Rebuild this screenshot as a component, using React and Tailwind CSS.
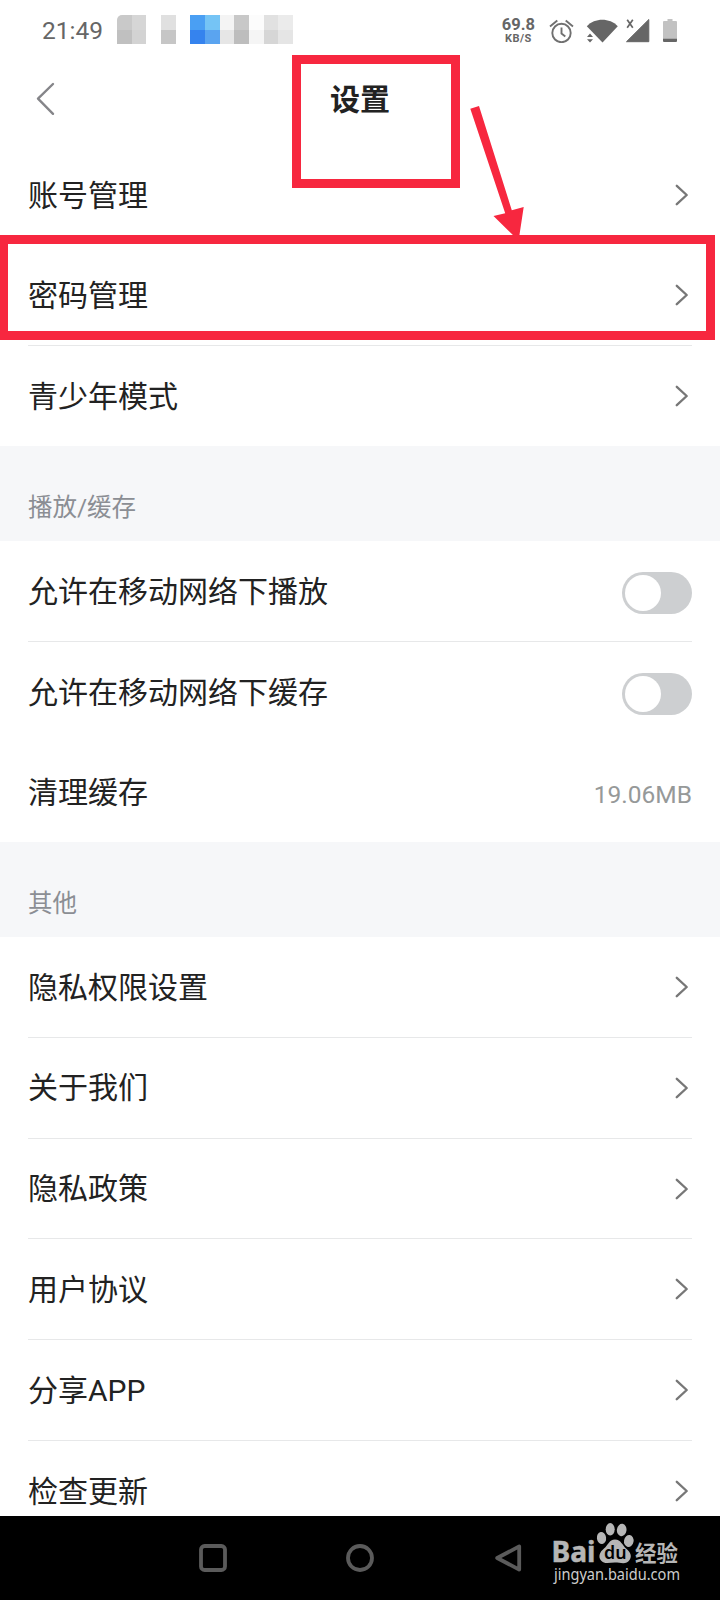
const mosaicTop = [
  "bg-[#c9c9c9] rounded-tl-[5px]", "bg-[#d6d6d6]", "bg-white", "bg-[#e0e0e0]", "bg-white", "bg-[#4a9ff3]",
  "bg-[#75c4f5]", "bg-[#f4f4f4]", "bg-[#c8c8c8]", "bg-[#fcfcfc]", "bg-[#e1e1e1]", "bg-[#ebebeb]",
];
const mosaicBottom = [
  "bg-[#c0c0c0]", "bg-[#d3d3d3]", "bg-white", "bg-[#c6c6c6]", "bg-white", "bg-[#3583ee]",
  "bg-[#5aa4f0]", "bg-[#e6e6e6]", "bg-[#bdbdbd]", "bg-[#f5f5f5]", "bg-[#d6d6d6]", "bg-[#e5e5e5]",
];

const otherItems = ["隐私权限设置", "关于我们", "隐私政策", "用户协议", "分享APP", "检查更新"];

export default function App() {
  return (
    <div className="relative w-[720px] h-[1600px] overflow-hidden flex flex-col bg-white text-[#222222] font-[Roboto,'Noto_Sans_CJK_SC',sans-serif]">
      <StatusBar />

      <header className="h-[84.9px] shrink-0 grid grid-cols-[1fr_auto_1fr] items-start px-9 pt-[22px]">
        <svg className="w-5 h-[34px]" viewBox="0 0 20 34" fill="none" stroke="#858589" strokeWidth="2.4" strokeLinecap="round" strokeLinejoin="round">
          <path d="M17 2 2 16.7 17 31.8" />
        </svg>
        <h1 className="text-[30px] leading-9 font-bold">设置</h1>
      </header>

      <main className="flex-1 min-h-0 overflow-hidden">
        <Row label="账号管理">
          <Chevron />
        </Row>
        <Row label="密码管理" divider>
          <Chevron />
        </Row>
        <Row label="青少年模式">
          <Chevron />
        </Row>

        <SectionTitle>播放/缓存</SectionTitle>
        <Row label="允许在移动网络下播放" divider>
          <Toggle />
        </Row>
        <Row label="允许在移动网络下缓存">
          <Toggle />
        </Row>
        <Row label="清理缓存">
          <span className="text-[24.5px] text-[#969999] pt-1.5">19.06MB</span>
        </Row>

        <SectionTitle>其他</SectionTitle>
        {otherItems.map((label) => (
          <Row key={label} label={label} divider>
            <Chevron />
          </Row>
        ))}
      </main>

      <NavigationBar />
      <Highlights />
    </div>
  );
}

function StatusBar() {
  return (
    <div className="h-[60px] shrink-0 flex items-start pl-[42px] pr-[43px] text-[#666666]">
      <span className="mt-[15px] w-[75px] text-[24.5px] leading-[31px]">21:49</span>
      <div className="mt-[15px] w-[176px] h-[29px] grid grid-cols-12 grid-rows-2">
        {[...mosaicTop, ...mosaicBottom].map((color, i) => (
          <span key={i} className={color} />
        ))}
      </div>

      <div className="ml-auto flex items-start">
        <div className="mt-[17px] mr-3.5 flex flex-col items-center font-bold">
          <span className="text-[16.5px] leading-4">69.8</span>
          <span className="text-[11px] leading-[11px] tracking-[0.5px]">KB/S</span>
        </div>
        <svg className="mt-[19px] w-[25px] h-6 mr-3" viewBox="0 0 25 24" fill="none" stroke="#707070" strokeWidth="1.9">
          <circle cx="12.5" cy="14" r="9.2" />
          <path d="M1 7.5 8.3 1.6M24 7.5 16.7 1.6M12.5 8.5v6l3.8 3" />
        </svg>
        <svg className="mt-[19px] w-[32px] h-6 mr-2" viewBox="0 0 32 24" fill="#666666">
          <path d="M.8 7.2C9-1.3 23.5-1.3 31.8 7.2L16.5 23.4Z" />
          <path d="m1 18 3-3.6L7 18Zm0 2.2h6l-3 3.3Z" stroke="#ffffff" strokeWidth="1.6" paintOrder="stroke" />
        </svg>
        <svg className="mt-[19px] w-6 h-6 mr-[13px]" viewBox="0 0 24 24" fill="#666666">
          <path d="M22.8.5v22.2H.5Z" stroke="#666666" strokeWidth="1" strokeLinejoin="round" />
          <path d="m1.2.8 5.6 8M6.8.8l-5.6 8" stroke="#666666" strokeWidth="1.7" />
        </svg>
        <svg className="mt-[19px] w-3.5 h-[23px]" viewBox="0 0 14 23">
          <path d="M4.5 0h5v2H13q1 0 1 1v17H0V3q0-1 1-1h3.5Z" fill="#c2c2c2" />
          <path d="M0 19.7h14V22q0 1-1 1H1q-1 0-1-1Z" fill="#666666" />
        </svg>
      </div>
    </div>
  );
}

function Row({ label, divider, children }) {
  return (
    <div className={divider ? "h-[100.8px] px-7" : "h-[100.3px] px-7"}>
      <div className={`h-full flex items-center justify-between ${divider ? "border-b border-[#e7e8e9]" : ""}`}>
        <span className="text-[30px] leading-10 pt-[1.4px]">{label}</span>
        {children}
      </div>
    </div>
  );
}

function SectionTitle({ children }) {
  return (
    <div className="h-[94.7px] bg-[#f6f7f9] px-7 pt-[44.8px] text-[24.5px] leading-[34px] text-[#8b8e94]">
      {children}
    </div>
  );
}

function Chevron() {
  return (
    <svg className="w-3.5 h-[22px] mr-1" viewBox="0 0 14 22" fill="none" stroke="#777777" strokeWidth="2.3" strokeLinecap="round" strokeLinejoin="round">
      <path d="M2.8 1.8 12.7 11 2.8 20.2" />
    </svg>
  );
}

function Toggle() {
  return (
    <div className="w-[70px] h-[42px] mt-1 rounded-full bg-[#cdcfd1] p-[3px] flex items-center">
      <div className="size-9 rounded-full bg-white" />
    </div>
  );
}

function NavigationBar() {
  return (
    <nav className="relative h-[84px] shrink-0 bg-black pl-[199px] pr-[198px] flex items-center justify-between">
      <svg className="size-7" viewBox="0 0 28 28" fill="none" stroke="#5b5b5b" strokeWidth="3.8">
        <rect x="2" y="2" width="24" height="24" rx="3.6" />
      </svg>
      <svg className="size-7 -translate-x-px" viewBox="0 0 28 28" fill="none" stroke="#5b5b5b" strokeWidth="3.8">
        <circle cx="14" cy="14" r="12" />
      </svg>
      <svg className="size-7" viewBox="0 0 28 28" fill="none" stroke="#5b5b5b" strokeWidth="3.8" strokeLinejoin="round">
        <path d="M25.2 2.4v23.2L3.2 14Z" />
      </svg>

      <Watermark />
    </nav>
  );
}

function Watermark() {
  return (
    <svg className="absolute left-[550px] top-1.5 w-[136px] h-[70px]" viewBox="0 0 136 70" fill="#b6b6b6">
      <text x="1.5" y="40" fontSize="28.5" fontWeight="700" textLength="44" lengthAdjust="spacingAndGlyphs" fontFamily="Noto Sans, sans-serif" stroke="#b6b6b6" strokeWidth="0.5">Bai</text>
      <ellipse cx="51.5" cy="16" rx="4.6" ry="6.1" transform="rotate(-8 51.5 16)" />
      <ellipse cx="60.2" cy="7.3" rx="4.5" ry="6.2" />
      <ellipse cx="71.7" cy="8" rx="4.8" ry="6.2" transform="rotate(8 71.7 8)" />
      <ellipse cx="78.8" cy="19" rx="4.8" ry="6" transform="rotate(10 78.8 19)" />
      <path d="M65 17.5c6 0 7.5 6 11 9 5 4 6 8 3.5 11.5-3 5-9 2.5-14.5 2.5s-10.5 2-14-2C48 35 49.5 30 54 26.5c4-3 5-9 11-9Z" />
      <text x="54" y="36.5" fontSize="17.5" fontWeight="600" fill="#000000" textLength="22.5" lengthAdjust="spacingAndGlyphs" fontFamily="Noto Sans, sans-serif">du</text>
      <text x="85" y="38.5" fontSize="22" fontWeight="700" textLength="43" lengthAdjust="spacingAndGlyphs" fontFamily="Noto Sans CJK SC, sans-serif">经验</text>
      <text x="4" y="57.5" fontSize="15.5" fill="#cccccc" textLength="126" lengthAdjust="spacingAndGlyphs" fontFamily="Noto Sans, sans-serif">jingyan.baidu.com</text>
    </svg>
  );
}

function Highlights() {
  return (
    <>
      <div className="absolute left-[292px] top-[55px] w-[168px] h-[133px] border-[9px] border-[#f7273f]" />
      <div className="absolute -left-px top-[235px] w-[716px] h-[105px] border-[9px] border-[#f7273f]" />
      <svg className="absolute left-[465px] top-[100px] w-[65px] h-[140px]" viewBox="0 0 65 140" fill="#f7273f">
        <path d="M5.3 8.7 14 6 46.8 110.3 58.7 107 54 138 51 138 28.5 116 40.2 113.3Z" />
      </svg>
    </>
  );
}
